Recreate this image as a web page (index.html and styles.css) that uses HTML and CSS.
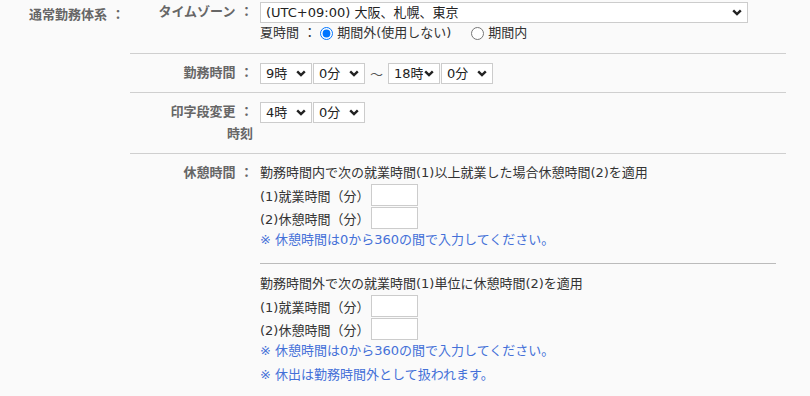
FILE: index.html
```html
<!DOCTYPE html>
<html lang="ja">
<head>
  <meta charset="UTF-8" />
  <title>勤務体系設定</title>
  <link rel="stylesheet" href="styles.css">
</head>
<body>
  <div class="settings">
    <div class="group-label">通常勤務体系 ：</div>
    <div class="group-body">
      <div class="row row-first">
        <div class="row-label">タイムゾーン ：</div>
        <div class="row-value">
          <select class="sel sel-wide"><option>(UTC+09:00) 大阪、札幌、東京</option></select>
          <div class="dst">
            <span>夏時間 ：</span>
            <label class="radio"><input type="radio" name="dst" checked>期間外(使用しない)</label>
            <label class="radio radio-in"><input type="radio" name="dst">期間内</label>
          </div>
        </div>
      </div>

      <div class="row">
        <div class="row-label">勤務時間 ：</div>
        <div class="row-value time-pick">
          <select class="sel"><option>9時</option></select>
          <select class="sel"><option>0分</option></select>
          <span class="tilde">～</span>
          <select class="sel"><option>18時</option></select>
          <select class="sel"><option>0分</option></select>
        </div>
      </div>

      <div class="row">
        <div class="row-label">印字段変更 ：<br>時刻</div>
        <div class="row-value time-pick">
          <select class="sel"><option>4時</option></select>
          <select class="sel"><option>0分</option></select>
        </div>
      </div>

      <div class="row row-last">
        <div class="row-label">休憩時間 ：</div>
        <div class="row-value">
          <div class="break-block">
            <div class="break-title">勤務時間内で次の就業時間(1)以上就業した場合休憩時間(2)を適用</div>
            <div class="break-field"><span>(1)就業時間（分）</span><input type="text" class="num"></div>
            <div class="break-field"><span>(2)休憩時間（分）</span><input type="text" class="num"></div>
            <div class="note">※ 休憩時間は0から360の間で入力してください。</div>
          </div>
          <hr class="inner">
          <div class="break-block">
            <div class="break-title">勤務時間外で次の就業時間(1)単位に休憩時間(2)を適用</div>
            <div class="break-field"><span>(1)就業時間（分）</span><input type="text" class="num"></div>
            <div class="break-field"><span>(2)休憩時間（分）</span><input type="text" class="num"></div>
            <div class="note">※ 休憩時間は0から360の間で入力してください。</div>
            <div class="note note-gap">※ 休出は勤務時間外として扱われます。</div>
          </div>
        </div>
      </div>
    </div>
  </div>
</body>
</html>
```

FILE: styles.css
```css
body {
  margin: 0;
  background-color: #fafafa;
  font-family: 'DejaVu Sans', 'Noto Sans CJK JP', sans-serif;
  font-size: 13px;
  color: #333;
}
.settings {
  display: flex;
}
.group-label {
  width: 101px;
  padding: 4px 0 0 29px;
  line-height: 22px;
  font-weight: bold;
  color: #666;
}
.group-body {
  width: 656px;
}
.row {
  display: grid;
  grid-template-columns: 123px 1fr;
  column-gap: 7px;
  align-items: start;
  padding: 9px 0 8px;
  border-bottom: 1px solid #cfcfcf;
}
.row-first {
  padding: 2px 0 10px;
}
.row-last {
  border-bottom: none;
}
.row-label {
  margin-top: -1px;
  line-height: 22px;
  text-align: right;
  font-weight: bold;
  color: #666;
}
.sel {
  appearance: none;
  -webkit-appearance: none;
  box-sizing: border-box;
  width: 52px;
  height: 21px;
  margin: 0;
  padding: 0 16px 0 5px;
  border: 1px solid #ccc;
  border-radius: 0;
  background: #fff url("data:image/svg+xml,%3Csvg xmlns='http://www.w3.org/2000/svg' width='10' height='7' viewBox='0 0 10 7'%3E%3Cpath d='M1.2 1.3L5 5.1l3.8-3.8' fill='none' stroke='%23222' stroke-width='2.4'/%3E%3C/svg%3E") no-repeat right 5px center;
  font-family: inherit;
  font-size: 13px;
  color: #222;
  display: block;
}
.sel-wide {
  width: 488px;
}
.dst {
  display: flex;
  align-items: center;
  line-height: 20px;
}
.radio {
  display: flex;
  align-items: center;
}
.radio input {
  width: 13px;
  height: 13px;
  margin: 0 4px 0 4px;
}
.radio-in {
  margin-left: 16px;
}
.time-pick {
  display: flex;
  align-items: center;
  gap: 1px;
}
.tilde {
  margin: 0 4px;
  color: #555;
}
.break-title {
  line-height: 20px;
  margin-bottom: 1px;
}
.break-field {
  display: flex;
  align-items: center;
  height: 22px;
  margin-bottom: 1px;
}
.break-field span {
  width: 111px;
}
.num {
  box-sizing: border-box;
  width: 47px;
  height: 22px;
  margin: 0;
  border: 1px solid #ccc;
  background: #fff;
}
.note {
  line-height: 20px;
  color: #4470d8;
}
.note-gap {
  margin-top: 4px;
}
hr.inner {
  width: 516px;
  margin: 13px 0 10px;
  border: none;
  border-top: 1px solid #bbb;
}
```
